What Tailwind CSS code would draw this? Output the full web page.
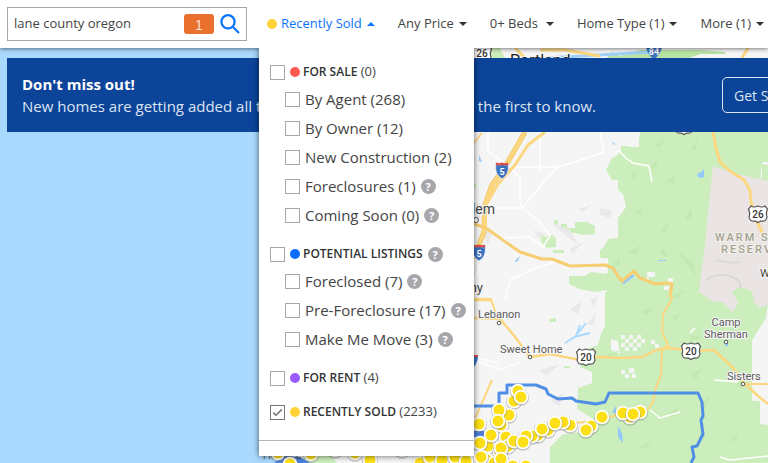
<!DOCTYPE html>
<html lang="en">
<head>
<meta charset="utf-8">
<meta name="viewport" content="width=device-width, initial-scale=1">
<title>Lane County Oregon Real Estate</title>
<script src="https://cdn.jsdelivr.net/npm/@tailwindcss/browser@4"></script>
</head>
<body class="flex h-screen flex-col overflow-hidden bg-[#a9d9fe] font-['Open_Sans','Noto_Sans',sans-serif] text-[13px] text-[#444]">

<header class="relative z-20 flex h-12 shrink-0 items-center bg-white pl-[7px] shadow-[0_1px_4px_rgba(0,0,0,0.5)]">
  <form class="flex h-[34px] w-[240px] shrink-0 items-center border border-[#a7a6ab] pr-1.5 pl-1.5" onsubmit="return false">
    <input type="text" aria-label="Search location" value="lane county oregon" class="min-w-0 flex-1 bg-transparent text-[13px] text-[#444] outline-none">
    <span class="mr-1.5 flex h-5 w-[30px] items-end justify-center rounded-[3px] bg-[#ea702e] font-['Liberation_Sans',sans-serif] text-[14px] leading-[18px] text-[#fbe0d2]">1</span>
    <button type="submit" aria-label="Search" class="size-5">
      <svg viewBox="0 0 20 20" class="size-5" fill="none" stroke="#0a74ff" stroke-width="2.2"><circle cx="8" cy="7.8" r="6.6"/><path d="M12.7 12.7 19 19"/></svg>
    </button>
  </form>

  <nav class="ml-5 flex h-full items-center gap-[23px] whitespace-nowrap">
    <div class="relative flex h-full items-center">
      <button type="button" aria-expanded="true" class="flex items-center text-[#0a74ff]">
        <span class="mr-1 size-2.5 rounded-full bg-[#ffd237]"></span>Recently Sold
        <svg viewBox="0 0 8 4" class="ml-[5px] h-1 w-2" fill="#0a74ff"><path d="M0 4 4 0l4 4z"/></svg>
      </button>

      <div class="absolute top-full -left-2 w-[215px] bg-white pt-[11px] text-[15px] text-[#444] shadow-[0_0_6px_rgba(0,0,0,0.6)] [clip-path:inset(0_-8px_-8px_-8px)]">
        <div class="flex flex-col gap-2 pb-[15px] pl-[11px]">
          <section>
            <div class="flex h-[26px] items-center text-[13px]">
              <input id="sale" type="checkbox" class="size-[15px] appearance-none border border-[#a7a6ab]">
              <span class="mr-[3px] ml-[5px] size-2.5 rounded-full bg-[#fd5b51]"></span>
              <label for="sale"><span class="text-[12px] font-semibold text-[#333]">FOR SALE</span> (0)</label>
            </div>
            <ul class="pb-[3px] pl-[15px]">
              <li class="flex h-[29px] items-center"><input id="agent" type="checkbox" class="mr-[5px] size-[15px] appearance-none border border-[#a7a6ab]"><label for="agent">By Agent (268)</label></li>
              <li class="flex h-[29px] items-center"><input id="owner" type="checkbox" class="mr-[5px] size-[15px] appearance-none border border-[#a7a6ab]"><label for="owner">By Owner (12)</label></li>
              <li class="flex h-[29px] items-center"><input id="newc" type="checkbox" class="mr-[5px] size-[15px] appearance-none border border-[#a7a6ab]"><label for="newc">New Construction (2)</label></li>
              <li class="flex h-[29px] items-center"><input id="forec" type="checkbox" class="mr-[5px] size-[15px] appearance-none border border-[#a7a6ab]"><label for="forec">Foreclosures (1)</label><button type="button" aria-label="About foreclosures" class="ml-[5px] size-[15px] rounded-full bg-[#a7a6ab] text-[11px] leading-[15px] font-bold text-white">?</button></li>
              <li class="flex h-[29px] items-center"><input id="soon" type="checkbox" class="mr-[5px] size-[15px] appearance-none border border-[#a7a6ab]"><label for="soon">Coming Soon (0)</label><button type="button" aria-label="About coming soon" class="ml-[5px] size-[15px] rounded-full bg-[#a7a6ab] text-[11px] leading-[15px] font-bold text-white">?</button></li>
            </ul>
          </section>
          <section>
            <div class="flex h-[26px] items-center text-[13px]">
              <input id="potential" type="checkbox" class="size-[15px] appearance-none border border-[#a7a6ab]">
              <span class="mr-[3px] ml-[5px] size-2.5 rounded-full bg-[#0a6cff]"></span>
              <label for="potential" class="text-[12px] font-semibold text-[#333]">POTENTIAL LISTINGS</label>
              <button type="button" aria-label="About potential listings" class="ml-[5px] size-[15px] rounded-full bg-[#a7a6ab] text-[11px] leading-[15px] font-bold text-white">?</button>
            </div>
            <ul class="pb-[3px] pl-[15px]">
              <li class="flex h-[29px] items-center"><input id="foreclosed" type="checkbox" class="mr-[5px] size-[15px] appearance-none border border-[#a7a6ab]"><label for="foreclosed">Foreclosed (7)</label><button type="button" aria-label="About foreclosed" class="ml-[5px] size-[15px] rounded-full bg-[#a7a6ab] text-[11px] leading-[15px] font-bold text-white">?</button></li>
              <li class="flex h-[29px] items-center"><input id="pre" type="checkbox" class="mr-[5px] size-[15px] appearance-none border border-[#a7a6ab]"><label for="pre">Pre-Foreclosure (17)</label><button type="button" aria-label="About pre-foreclosure" class="ml-[5px] size-[15px] rounded-full bg-[#a7a6ab] text-[11px] leading-[15px] font-bold text-white">?</button></li>
              <li class="flex h-[29px] items-center"><input id="mmm" type="checkbox" class="mr-[5px] size-[15px] appearance-none border border-[#a7a6ab]"><label for="mmm">Make Me Move (3)</label><button type="button" aria-label="About make me move" class="ml-[5px] size-[15px] rounded-full bg-[#a7a6ab] text-[11px] leading-[15px] font-bold text-white">?</button></li>
            </ul>
          </section>
          <div class="flex h-[26px] items-center text-[13px]">
            <input id="rent" type="checkbox" class="size-[15px] appearance-none border border-[#a7a6ab]">
            <span class="mr-[3px] ml-[5px] size-2.5 rounded-full bg-[#985cff]"></span>
            <label for="rent"><span class="text-[12px] font-semibold text-[#333]">FOR RENT</span> (4)</label>
          </div>
          <div class="flex h-[26px] items-center text-[13px]">
            <span class="grid size-[15px]">
              <input id="sold" type="checkbox" checked class="peer col-start-1 row-start-1 size-[15px] appearance-none border border-[#77767b]">
              <svg viewBox="0 0 15 15" class="pointer-events-none invisible col-start-1 row-start-1 size-[15px] peer-checked:visible" fill="none" stroke="#77767b" stroke-width="1.5"><path d="M3.2 7.6 6 10.3 11.8 4.4"/></svg>
            </span>
            <span class="mr-[3px] ml-[5px] size-2.5 rounded-full bg-[#ffd237]"></span>
            <label for="sold"><span class="text-[12px] font-semibold text-[#333]">RECENTLY SOLD</span> (2233)</label>
          </div>
        </div>
        <div class="h-4 border-t border-[#b5b5b5]"></div>
      </div>
    </div>

    <button type="button" class="flex items-center">Any Price<svg viewBox="0 0 8 4" class="ml-[5px] h-1 w-2" fill="#333"><path d="M0 0h8L4 4z"/></svg></button>
    <button type="button" class="flex items-center">0+ Beds<svg viewBox="0 0 8 4" class="ml-2 h-1 w-2" fill="#333"><path d="M0 0h8L4 4z"/></svg></button>
    <button type="button" class="flex items-center">Home Type (1)<svg viewBox="0 0 8 4" class="ml-[5px] h-1 w-2" fill="#333"><path d="M0 0h8L4 4z"/></svg></button>
    <button type="button" class="flex items-center">More (1)<svg viewBox="0 0 8 4" class="ml-[5px] h-1 w-2" fill="#333"><path d="M0 0h8L4 4z"/></svg></button>
  </nav>
</header>

<main class="relative min-h-0 flex-1">
  <svg viewBox="0 48 768 415" preserveAspectRatio="xMinYMin slice" class="absolute inset-0 size-full font-[Roboto,sans-serif]" role="img" aria-label="Map of recently sold homes">
    <defs>
      <g id="i5"><path d="M-6-6Q-3-4 0-6 3-4 6-6 8 4 0 9-8 4-6-6z" fill="#3b73c1" stroke="#f7f7f7" stroke-width=".7"/><path d="M-6-7.5Q-3-6 0-7.5 3-6 6-7.5L6.3-4.7H-6.3z" fill="#d94d4b"/><text y="5" text-anchor="middle" font-size="9" font-weight="700" fill="#fff">5</text></g>
      <g id="us"><path d="M-7-8Q-4-6 0-8 4-6 7-8L9.5-5Q7.500 0 9 3 8 8 3 7L0 8.500-3 7Q-8 8-9 3-7.500 0-9.500-5z" fill="#fff" stroke="#555" stroke-width="1.2"/></g>
      <g id="pin"><circle cy=".8" r="8" fill="#777" opacity=".4"/><circle r="7.300" fill="#fff"/><circle r="5.500" fill="#fddf16"/></g>
    </defs>
    <rect y="48" width="768" height="415" fill="#a9d9fe"/>
    <path d="M300 48H768V463H276L290 440z" fill="#f5f5f5"/>

    <!-- forests and parks -->
    <g fill="#cceebc">
      <path d="M768 132H640V137H638V146H618V155L612 158 606 170 612 180H618V190L623 194 626 207 618 218V238L608 239 604 247 600 250V258H608V272L604 279 607 292H605V326L601 334 598 345 584 350 580 367 592 372H592V383L578 388 577 409 592 418 590 430 562 435 550 447V463H768V424H760V400H752V340L766 318 768 306z"/>
      <path d="M540 231 545 237 552 235 556 238V247L547 248 541 242z"/>
      <path d="M554 220h4v6h-4zM561 224h6v4h8v-6h12l8 4v8l-12 1-8-2h-10v-3h-6zM569 276h16l6-4 16 2v16l-12 2-16-3-10-5zM553 250h11v3h-11z"/>
      <path d="M476 48 490 58H505L500 48zM549 319l7-1v4h-6zM564 366h6v2h-6zM468 184h8v4h-8z"/>
      <path d="M550 447H592V440H768V463H550z"/>
      <path d="M300 458 330 455 337 463H300z"/>
    </g>
    <path d="M605 60 612 52 620 56 640 50 700 50 725 52 725 54 700 54 690 58H605z" fill="#b9e3a5"/>
    <!-- clearings -->
    <g fill="#f5f5f5">
      <path d="M618 132H639V147H629V144H621V153H618zM618 192 622 194 625 204 620 214 618 217zM762 162H768V181H760zM768 306V425L760 424V401H753V372H758V345L766 342V318z"/>
      <path d="M621 335h4v4h-4zM629 335h4v4h-4zM637 335h4v4h-4zM625 339h4v4h-4zM633 339h4v4h-4zM621 343h4v4h-4zM629 343h4v4h-4zM637 343h4v4h-4zM625 347h4v4h-4zM633 347h4v4h-4zM641 339h4v4h-4zM651 340h4v4h-4zM655 344h4v4h-4zM621 370h4v4h-4zM629 368h5v5h-5zM625 374h4v4h-4zM632 374h4v4h-4zM647 272h8v5h-8zM645 278h4v4h-4zM668 278h5v4h-5zM664 286h5v4h-5zM618 341 611 339V350L620 354z"/>
    </g>
    <g fill="#bfe6ae" opacity=".7">
      <path d="M630 175l6-5-1 10zM648 168l10-8-2 9zM665 182l12-8-4 10zM634 215l8-9 0 8zM660 230l9-8-3 10zM628 252l14-7-6 9zM655 258l9-10 4 9-9-4zM676 250l18 14 2 12zM685 220l6-14 1 12zM690 150l8-12-2 12zM655 145l10-6-5 9zM640 312l14-6-7 9zM672 318l10-7-6 10zM690 335l12 3-12 3zM700 405l10-9-5 13zM668 415l12-10-5 11zM640 448l10-8-3 9zM735 385l12-9-6 13zM730 440l10-9-5 11zM690 375l12-7-6 12zM612 265l8-8 0 8zM606 355l14-5-8 8zM672 295l14-5-10 9z"/>
    </g>
    <g fill="#e9e9e9">
      <path d="M600 208l12 2-2 8-10-3zM578 209l14-4-10 7zM550 222l20 8 8 14-12-8zM570 248l14-6-12 12zM540 370l20-6-14 12zM550 400l14-7-5 14zM570 310l12-10-4 14zM586 325l10-12-2 12zM484 228l8 6-4 12-4-10zM474 202l6 2 0 14-6 0zM590 300l8-4-4 12zM534 230l12 4-8 4zM536 432l12-8-4 12z"/>
    </g>
    <!-- reservation -->
    <path d="M713 166 768 179V305L760 308 752 300 744 298 736 306 732 312 724 303 712 301 699 292 700 280 704 254z" fill="#eae5e4"/>
    <path d="M732 292 740 287 752 291 754 300 740 306z" fill="#cceebc"/>
    <path d="M712 166 738 174 750 177 768 181V165L762 164V178L745 173z" fill="#cceebc"/>
    <path d="M706 280q12-8 24-4t10 12M716 260q14 4 24 2" fill="none" stroke="#dcd8d7" stroke-width="2"/>

    <!-- water -->
    <g fill="#94c9f7">
      <path d="M697 174l4-2 3-3v8l-3 1-3-1zM622 283 632 274 635 276 624 284zM479 155l3 7-3-1zM514 262l6-6-2 5zM612 141l4 4-3-1zM658 260h8v1h-8zM725 342h3v4h-3z"/>
      <path d="M618 426l4 7 1 10-5-6zM612 412l4-6 0 8z"/>
    </g>
    <path d="M565 343 576 336 580 325M574 337 590 333M578 333 586 323" fill="none" stroke="#a9d9fe" stroke-width="2"/>
    <path d="M274 463 284 456 300 457 310 463z" fill="#4b7fdc"/>
    <path d="M545 58 600 55 650 52" fill="none" stroke="#9dcff7" stroke-width="3"/>

    <!-- minor roads -->
    <g fill="none" stroke="#fff" stroke-width="1.500">
      <path d="M488 132V151L510 167 556 167 575 162 604 152 600 132M540 132V172M557 167 522 208 520 202V178L510 167M522 208 495 208M522 208 540 222 550 236 543 247 530 237 500 238M474 360 500 370 520 362M474 357 498 363M505 300 510 280 535 268 555 262M474 284 480 265M618 150 626 158 633 163 649 166 652 182M650 410 660 418 680 412M714 380 738 382M720 457 730 460 768 456M690 333 695 328"/>
    </g>
    <!-- highways -->
    <g fill="none" stroke="#e9b957" stroke-width="3">
      <path d="M525 132 505 167 492 185 485 205 484 225 484 232 474 258" stroke-width="5"/>
    </g>
    <g fill="none" stroke="#fcd77f" stroke-linejoin="round">
      <path d="M525 132 505 167 492 185 485 205 484 225 484 232 474 258" stroke-width="4"/>
      <path d="M545 132 528 145 515 165 498 184 486 205 485 231" stroke-width="3"/>
      <path d="M474 300H492M474 318 500 319 512 333 530 357 550 354 575 359 600 357 620 358 642 357 656 350 669 348 695 351 714 350 733 368 743 382 758 396 768 404" stroke-width="2.500"/>
      <path d="M474 299 491 299 497 318M474 143 482 133M474 421 492 380" stroke-width="2"/>
      <path d="M713 132 716 148 720 162 731 172 744 180 750 190 751 202 756 220 766 240" stroke-width="3"/>
      <path d="M670 297 672 284 667 283 655 284 640 278 634 271 622 281 618 276 613 268 605 265 570 266 552 259 542 259 520 252 500 238 486 228 474 224" stroke-width="3" stroke="#f6cd70"/>
      <path d="M670 290 672 299 663 314 662 332 668 345 662 350 661 375 655 390 653 402 645 413" stroke-width="2"/>
      <path d="M742 384H768" stroke-width="2"/>
      <path d="M515 48 525 58M540 50 565 50 600 56M748 48 742 58" stroke-width="3"/>
      <path d="M484 459 520 445 560 425 600 420 620 414" stroke-width="2"/>
    </g>

    <!-- county border -->
    <path d="M474 406H499V393H507V385H536L546 389 548 394 558 399 572 398 576 401 596 404 605 402 609 393H698L702 402 703 416 701 420 703 434 697 446 692 447 694 457 691 463" fill="none" stroke="#508fe6" stroke-width="3" stroke-linejoin="round"/>
    <path d="M474 431H484V437H474z" fill="#4b7fdc"/>

    <!-- shields -->
    <use href="#i5" x="502" y="170"/><use href="#i5" x="479" y="252"/>
    <path d="M468 357H478Q477 366 470 370z" fill="#3b73c1"/><path d="M468 355h10v2h-10z" fill="#d94d4b"/>
    <use href="#us" x="758" y="214"/><use href="#us" x="586" y="357"/><use href="#us" x="691" y="351"/><use href="#us" x="482" y="54"/><use href="#us" x="684" y="126"/>
    <path d="M646 46H662Q661 55 654 59 647 55 646 46z" fill="#3b73c1"/>
    <g font-size="10" text-anchor="middle" fill="#333" font-weight="500"><text x="758" y="218">26</text><text x="586" y="361">20</text><text x="691" y="355">20</text><text x="482" y="57">26</text><text x="654" y="55" fill="#fff" font-weight="700" font-size="9">84</text></g>

    <!-- place names -->
    <g fill="#5c5c5c" stroke="#f7f7f7" stroke-width="2" paint-order="stroke" font-size="11">
      <text x="510" y="66" font-size="16" fill="#222">Portland</text>
      <text x="495" y="214" text-anchor="end" font-size="14" fill="#444">Salem</text>
      <text x="483" y="292" text-anchor="end" font-size="13" fill="#444">Albany</text>
      <text x="478" y="318">Lebanon</text>
      <text x="500" y="353">Sweet Home</text>
      <text x="726" y="326" text-anchor="middle">Camp</text><text x="726" y="338" text-anchor="middle">Sherman</text>
      <text x="727" y="380">Sisters</text>
      <text x="760" y="277" fill="#444">Warm Springs</text>
    </g>
    <g fill="#a3a28e" stroke="#f3f0ee" stroke-width="2" paint-order="stroke" font-size="11" font-weight="500" letter-spacing="2"><text x="715" y="241">WARM SPRINGS</text><text x="721" y="253">RESERVATION</text></g>
    <g fill="#fff" stroke="#555"><circle cx="476" cy="220" r="2.500"/><circle cx="499" cy="323" r="1.800"/><circle cx="530" cy="357" r="1.800"/><circle cx="726" cy="342" r="1.800"/><circle cx="743" cy="384" r="1.800"/></g>
    <text x="263" y="459" font-size="10" fill="#555">Florence</text>

    <!-- sold homes -->
    <g>
      <use href="#pin" x="290" y="464"/><use href="#pin" x="278" y="453"/><use href="#pin" x="311" y="454"/><use href="#pin" x="335" y="450"/><use href="#pin" x="355" y="453"/><use href="#pin" x="370" y="460"/><use href="#pin" x="402" y="450"/><use href="#pin" x="420" y="463"/><use href="#pin" x="430" y="457"/><use href="#pin" x="442" y="460"/><use href="#pin" x="455" y="457"/><use href="#pin" x="466" y="461"/>
      <use href="#pin" x="514" y="401"/><use href="#pin" x="518" y="391"/><use href="#pin" x="521" y="397"/>
      <use href="#pin" x="509" y="415"/><use href="#pin" x="501" y="425"/><use href="#pin" x="499" y="410"/><use href="#pin" x="498" y="421"/><use href="#pin" x="479" y="424"/>
      <use href="#pin" x="488" y="446"/><use href="#pin" x="506" y="437"/><use href="#pin" x="508" y="446"/><use href="#pin" x="491" y="435"/><use href="#pin" x="500" y="452"/><use href="#pin" x="480" y="443"/>
      <use href="#pin" x="487" y="460"/><use href="#pin" x="494" y="463"/><use href="#pin" x="481" y="457"/><use href="#pin" x="501" y="448"/><use href="#pin" x="501" y="459"/><use href="#pin" x="513" y="466"/><use href="#pin" x="526" y="466"/>
      <use href="#pin" x="548" y="430"/><use href="#pin" x="538" y="435"/><use href="#pin" x="532" y="436"/><use href="#pin" x="526" y="436"/><use href="#pin" x="514" y="441"/><use href="#pin" x="523" y="442"/><use href="#pin" x="542" y="429"/><use href="#pin" x="570" y="425"/><use href="#pin" x="563" y="422"/><use href="#pin" x="555" y="423"/>
      <use href="#pin" x="591" y="426"/><use href="#pin" x="586" y="430"/><use href="#pin" x="602" y="417"/><use href="#pin" x="630" y="417"/><use href="#pin" x="640" y="412"/><use href="#pin" x="623" y="413"/><use href="#pin" x="633" y="414"/>
    </g>
  </svg>

  <section class="relative mt-2.5 ml-[7px] flex h-[74px] items-center justify-between bg-[#0c4499] pl-[15px] text-[15px] text-[#dbe5f3]">
    <div class="leading-[22px] whitespace-nowrap">
      <h2 class="font-bold text-white">Don't miss out!</h2>
      <p>New homes are getting added all the time. Save this search to be the first to know.</p>
    </div>
    <div class="w-[46px] shrink-0 overflow-hidden">
      <button type="button" class="h-9 w-40 rounded-[5px] border border-[#dbe5f3] pl-[11px] text-left text-[14px] whitespace-nowrap text-[#dbe5f3]">Get Started</button>
    </div>
  </section>
</main>
</body>
</html>
